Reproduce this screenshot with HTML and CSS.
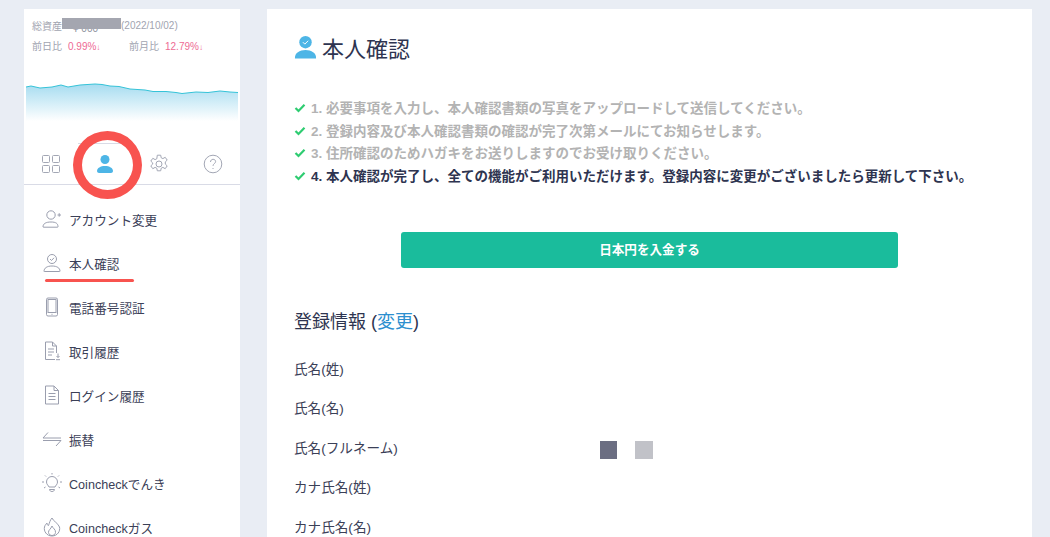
FILE: index.html
```html
<!DOCTYPE html>
<html lang="ja">
<head>
    <meta charset="UTF-8">
    <title>本人確認</title>
    <link rel="stylesheet" href="styles.css">
</head>
<body>
    <div class="page">
        <aside class="sidebar">
            <div class="assets">
                <div class="assets-total">
                    <span>総資産</span>
                    <span class="amount">¥ 000<span class="mask"></span></span>
                    <span>(2022/10/02)</span>
                </div>
                <div class="assets-change">
                    <span class="change">前日比<em>0.99%<i>↓</i></em></span>
                    <span class="change">前月比<em>12.79%<i>↓</i></em></span>
                </div>
            </div>
            <svg class="chart" viewBox="0 0 212 40" preserveAspectRatio="none">
                <defs>
                    <linearGradient id="area" x1="0" y1="0" x2="0" y2="1">
                        <stop offset="0" stop-color="#a6dcf0"/>
                        <stop offset="1" stop-color="#ffffff"/>
                    </linearGradient>
                </defs>
                <path fill="url(#area)" d="M0 4L5 3L14 5L26 4L35 2L42 4L54 2L69 1L76 1.500L84 3L93 3.500L104 6L119 7L127 8.500L140 8.500L150 9.500L156 10.500L170 9L182 9.500L194 8L204 9L212 9.500V38H0Z"/>
                <path fill="none" stroke="#35c3d8" stroke-width="1" d="M0 4L5 3L14 5L26 4L35 2L42 4L54 2L69 1L76 1.500L84 3L93 3.500L104 6L119 7L127 8.500L140 8.500L150 9.500L156 10.500L170 9L182 9.500L194 8L204 9L212 9.500"/>
            </svg>
            <div class="tabs">
                <div class="tab">
                    <svg class="tab-icon" viewBox="0 0 20 20" fill="none" stroke="#a3a7b5" stroke-width="1">
                        <rect x="1.500" y="1.500" width="7" height="7" rx="1"/>
                        <rect x="11.500" y="1.500" width="7" height="7" rx="1"/>
                        <rect x="1.500" y="11.500" width="7" height="7" rx="1"/>
                        <rect x="11.500" y="11.500" width="7" height="7" rx="1"/>
                    </svg>
                </div>
                <div class="tab tab-active">
                    <svg class="tab-icon" viewBox="0 0 20 20" fill="#4db5e6">
                        <circle cx="10" cy="5.500" r="4.500"/>
                        <path d="M2 17c0-3 3.500-5 8-5s8 2 8 5c0 1.200-1 2-2 2H4c-1 0-2-.8-2-2z"/>
                    </svg>
                </div>
                <div class="tab">
                    <svg class="tab-icon" viewBox="0 0 20 20" fill="none" stroke="#a3a7b5" stroke-width="1">
                        <circle cx="10" cy="10" r="3"/>
                        <path d="M8.300 1.200h3.400l.5 2.600 1.700.8 2.300-1.300 2 2.800-1.900 1.800v2.200l1.900 1.800-2 2.800-2.300-1.300-1.700.8-.5 2.600H8.300l-.5-2.600-1.700-.8-2.300 1.300-2-2.800 1.900-1.800V8.900L1.800 7.100l2-2.800 2.300 1.300 1.700-.8z"/>
                    </svg>
                </div>
                <div class="tab">
                    <svg class="tab-icon" viewBox="0 0 20 20" fill="none" stroke="#a3a7b5" stroke-width="1">
                        <circle cx="10" cy="10" r="8.800"/>
                        <path d="M7.500 8c0-1.600 1.100-2.700 2.600-2.700s2.500 1 2.500 2.300c0 1.900-2.600 2.100-2.600 4.300"/>
                        <path d="M10 14v1"/>
                    </svg>
                </div>
            </div>
            <nav class="menu">
                <a class="menu-item">
                    <svg class="menu-icon" viewBox="0 0 20 20" fill="none" stroke="#9a9eae" stroke-width="1">
                        <circle cx="9" cy="6" r="4.200"/>
                        <path d="M1 18c0-3.500 3-5 8-5s7 1.500 7 4.800c0 .2-.2.400-.4.400H1.500z"/>
                        <path d="M15.500 6h3.500M17.200 4.200v3.500"/>
                    </svg>
                    <span>アカウント変更</span>
                </a>
                <a class="menu-item">
                    <svg class="menu-icon" viewBox="0 0 20 20" fill="none" stroke="#9a9eae" stroke-width="1">
                        <circle cx="10" cy="6" r="4.500"/>
                        <path d="M8 6l1.500 1.500L12 4.800"/>
                        <path d="M2 18.500c0-3.500 3-5.500 8-5.500s8 2 8 5.200c0 .2-.2.300-.4.300H2.400z"/>
                    </svg>
                    <span>本人確認</span>
                </a>
                <a class="menu-item">
                    <svg class="menu-icon" viewBox="0 0 20 20" fill="none" stroke="#9a9eae" stroke-width="1">
                        <rect x="4.500" y="1" width="11" height="18" rx="1.500"/>
                        <rect x="6" y="2.500" width="8" height="13"/>
                        <path d="M9.500 17.300h1"/>
                    </svg>
                    <span>電話番号認証</span>
                </a>
                <a class="menu-item">
                    <svg class="menu-icon" viewBox="0 0 20 20" fill="none" stroke="#9a9eae" stroke-width="1">
                        <path d="M13 18.500H3.500V1h7l4 4v7"/>
                        <path d="M10.500 1v4h4"/>
                        <path d="M6 8h6M6 11h6M6 14h4"/>
                        <path d="M16 12.500v4M14.500 15l1.500 1.500 1.500-1.500M14 18.700h4"/>
                    </svg>
                    <span>取引履歴</span>
                </a>
                <a class="menu-item">
                    <svg class="menu-icon" viewBox="0 0 20 20" fill="none" stroke="#9a9eae" stroke-width="1">
                        <path d="M3.500 1h8.500l4.500 4.500v13.500H3.500z"/>
                        <path d="M12 1v4.500h4.500"/>
                        <path d="M6.500 8.500h7M6.500 11.500h7M6.500 14.500h7"/>
                    </svg>
                    <span>ログイン履歴</span>
                </a>
                <a class="menu-item">
                    <svg class="menu-icon" viewBox="0 0 20 20" fill="none" stroke="#9a9eae" stroke-width="1">
                        <path d="M6 3.500L1 9h18"/>
                        <path d="M14 17l5-5.500H1"/>
                    </svg>
                    <span>振替</span>
                </a>
                <a class="menu-item">
                    <svg class="menu-icon" viewBox="0 0 20 20" fill="none" stroke="#9a9eae" stroke-width="1">
                        <path d="M7 14c-.5-1.500-2.500-2.500-2.500-5a5.500 5.500 0 0 1 11 0c0 2.500-2 3.500-2.500 5z"/>
                        <path d="M7.500 16.500c.3 1.500 1.200 2 2.500 2s2.200-.5 2.500-2z"/>
                        <path d="M10 0v1.500M3 2.500l1 1M17 2.500l-1 1M0 9h2M18 9h2M2 15l1.500-1M18 15l-1.500-1"/>
                    </svg>
                    <span>Coincheckでんき</span>
                </a>
                <a class="menu-item">
                    <svg class="menu-icon" viewBox="0 0 20 20" fill="none" stroke="#9a9eae" stroke-width="1">
                        <path d="M10 1c1 3 6 5 7.500 9 1 4-2 9-7.500 9s-8.500-5-7.500-9c.5-2 1.500-3 2.500-4 0 1.500.5 2.500 1.500 2.500C7.500 6 8 3 10 1z"/>
                        <path d="M10 9c.5 2 4 3.500 3.500 6.500-.3 2-2 3-3.500 3s-3.200-1-3.500-3C6.200 13 9 12 10 9z"/>
                    </svg>
                    <span>Coincheckガス</span>
                </a>
            </nav>
            <div class="mark-circle"></div>
            <div class="mark-line"></div>
        </aside>
        <main class="content">
            <h1 class="title">
                <svg class="title-icon" viewBox="0 0 24 24">
                    <circle cx="12" cy="7" r="6.500" fill="#4db5e6"/>
                    <path d="M9.300 7l2 2 3.500-3.500" fill="none" stroke="#fff" stroke-width="1"/>
                    <path d="M1 24c-.5-6 5-9 11-9s11.500 3 11 9z" fill="#4db5e6"/>
                </svg>
                本人確認
            </h1>
            <ul class="steps">
                <li class="step"><svg class="check" viewBox="0 0 12 10"><path d="M1.500 5l3 3 6-6.300"/></svg>1. 必要事項を入力し、本人確認書類の写真をアップロードして送信してください。</li>
                <li class="step"><svg class="check" viewBox="0 0 12 10"><path d="M1.500 5l3 3 6-6.300"/></svg>2. 登録内容及び本人確認書類の確認が完了次第メールにてお知らせします。</li>
                <li class="step"><svg class="check" viewBox="0 0 12 10"><path d="M1.500 5l3 3 6-6.300"/></svg>3. 住所確認のためハガキをお送りしますのでお受け取りください。</li>
                <li class="step step-current"><svg class="check" viewBox="0 0 12 10"><path d="M1.500 5l3 3 6-6.300"/></svg>4. 本人確認が完了し、全ての機能がご利用いただけます。登録内容に変更がございましたら更新して下さい。</li>
            </ul>
            <a class="deposit">日本円を入金する</a>
            <h2 class="section-title">登録情報 (<a class="link">変更</a>)</h2>
            <dl class="info">
                <div class="info-row"><dt>氏名(姓)</dt><dd></dd></div>
                <div class="info-row"><dt>氏名(名)</dt><dd></dd></div>
                <div class="info-row">
                    <dt>氏名(フルネーム)</dt>
                    <dd class="masked-name"><span class="mask-dark"></span><span class="mask-light"></span></dd>
                </div>
                <div class="info-row"><dt>カナ氏名(姓)</dt><dd></dd></div>
                <div class="info-row"><dt>カナ氏名(名)</dt><dd></dd></div>
            </dl>
        </main>
    </div>
</body>
</html>
```

FILE: styles.css
```css
* {
    box-sizing: border-box;
}
html, body {
    height: 537px;
    overflow: hidden;
}
body {
    margin: 0;
    background-color: #e9edf4;
    font-family: "Liberation Sans", "Noto Sans CJK JP", sans-serif;
    color: #2e3450;
}
.page {
    display: flex;
    gap: 27px;
    height: 537px;
    padding: 9px 18px 0 24px;
}

/* sidebar */
.sidebar {
    position: relative;
    width: 216px;
    flex: none;
    background: white;
}
.assets {
    padding: 9px 8px 0 8px;
    font-size: 10px;
    color: #a1a4b0;
    height: 74px;
}
.assets-total {
    display: flex;
    height: 15px;
    align-items: center;
    white-space: nowrap;
}
.amount {
    position: relative;
    width: 59px;
    height: 15px;
    line-height: 15px;
    padding: 3px 0 0 11px;
    color: #8c8f9c;
    overflow: hidden;
}
.mask {
    position: absolute;
    left: 0;
    top: 0;
    width: 59px;
    height: 11px;
    background: #a4a6b0;
}
.assets-change {
    display: flex;
    margin-top: 5px;
    height: 14px;
    align-items: center;
}
.change {
    width: 97px;
}
.change em {
    font-style: normal;
    color: #ee6a94;
    margin-left: 6px;
}
.change i {
    font-style: normal;
    font-size: 8px;
}
.chart {
    display: block;
    width: 212px;
    height: 40px;
    margin-left: 2px;
}
.tabs {
    display: flex;
    height: 42px;
    margin-top: 20px;
    border-bottom: 1px solid #d9dbe6;
}
.tab {
    flex: 1;
    display: flex;
    align-items: center;
    justify-content: center;
}
.tab-active {
    border-top: 1px solid #d9dbe6;
}
.tab-icon {
    width: 20px;
    height: 20px;
}
.menu {
    display: flex;
    flex-direction: column;
    padding-top: 12px;
}
.menu-item {
    display: flex;
    align-items: center;
    height: 44px;
    padding-left: 18px;
    font-size: 12.600px;
    color: #3b4057;
}
.menu-icon {
    width: 20px;
    height: 20px;
    margin-right: 7px;
    flex: none;
}
.mark-circle {
    position: absolute;
    left: 49px;
    top: 122px;
    width: 69px;
    height: 68px;
    border: 9px solid #f8534f;
    border-radius: 50%;
}
.mark-line {
    position: absolute;
    left: 21px;
    top: 270px;
    width: 89px;
    height: 3px;
    border-radius: 2px;
    background: #f8534f;
}

/* main panel */
.content {
    width: 765px;
    flex: none;
    background: white;
    padding: 22px 27px 0 27px;
}
.title {
    display: flex;
    align-items: center;
    margin: 0;
    height: 32px;
    font-size: 22px;
    font-weight: 400;
    color: #2e3450;
}
.title-icon {
    width: 23px;
    height: 24px;
    margin-right: 5px;
}
.steps {
    list-style: none;
    margin: 35px 0 0 0;
    padding: 0;
}
.step {
    height: 22.500px;
    line-height: 22.500px;
    font-size: 13.500px;
    font-weight: 700;
    color: #b3b3b3;
    white-space: nowrap;
}
.step-current {
    color: #2e3450;
}
.check {
    width: 12px;
    height: 10px;
    margin-right: 5px;
    fill: none;
    stroke: #2ecc71;
    stroke-width: 2.200;
}
.deposit {
    display: block;
    width: 497px;
    height: 36px;
    line-height: 36px;
    margin: 44px 0 0 107px;
    background: #1abc9c;
    border-radius: 3px;
    color: white;
    text-align: center;
    font-size: 12.600px;
    font-weight: 700;
}
.section-title {
    margin: 39px 0 0 0;
    height: 30px;
    line-height: 30px;
    font-size: 18px;
    font-weight: 400;
    color: #2e3450;
}
.link {
    color: #2d8fcf;
}
.info {
    margin: 11px 0 0 0;
}
.info-row {
    display: flex;
    align-items: center;
    height: 39.500px;
    font-size: 13.600px;
    color: #3b4057;
}
.info-row dt {
    width: 306px;
}
.info-row dd {
    margin: 0;
}
.masked-name {
    display: flex;
    gap: 18px;
    padding-top: 7px;
}
.mask-dark {
    width: 17px;
    height: 18px;
    background: #6b6e82;
}
.mask-light {
    width: 18px;
    height: 18px;
    background: #c1c2c8;
}
```
